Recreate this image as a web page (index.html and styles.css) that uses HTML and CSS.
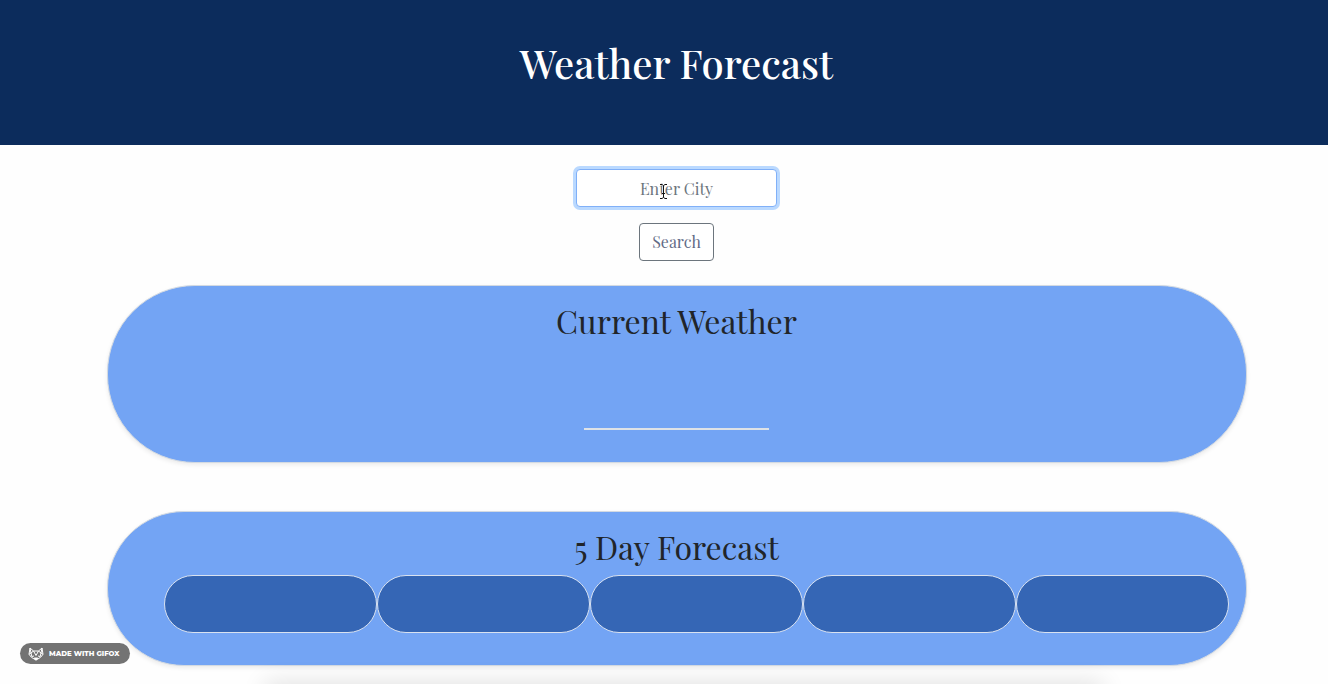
FILE: index.html
```html
<!DOCTYPE html>
<html lang="en">
<head>
<meta charset="utf-8">
<title>Weather Forecast</title>
<link rel="stylesheet" href="styles.css">
</head>
<body>
<div class="page">
  <header class="banner"><h1 class="title">Weather Forecast</h1></header>
  <main class="content">
    <form class="search">
      <div class="field">
        <input class="city" type="text" placeholder="Enter City" aria-label="Enter City">
        <svg class="cursor" viewBox="0 0 9 17" aria-hidden="true"><path class="halo" d="M1 1.500h2l1.500 1 1.500-1h2M1 15.500h2l1.500-1 1.500 1h2M4.500 2.500v12M3 10.500h3"/><path class="beam" d="M1 1.500h2l1.500 1 1.500-1h2M1 15.500h2l1.500-1 1.500 1h2M4.500 2.500v12M3 10.500h3"/></svg>
      </div>
      <button class="submit" type="button">Search</button>
    </form>
    <section class="panel current">
      <h2 class="heading heading-current">Current Weather</h2>
      <hr class="rule">
    </section>
    <section class="panel forecast">
      <h2 class="heading">5 Day Forecast</h2>
      <div class="days">
        <div class="day"></div>
        <div class="day"></div>
        <div class="day"></div>
        <div class="day"></div>
        <div class="day"></div>
      </div>
    </section>
  </main>
  <div class="dock-shadow"></div>
  <div class="badge">
    <svg class="fox" viewBox="0 0 16 14" aria-hidden="true"><path d="M2 1l3.500 3h5L14 1l1 6.300-2.300 2.900L8 13.200l-4.700-3L1 7.300zM2 1l1 5-2 1.300M14 1l-1 5 2 1.300M3 6l2.500-2L8 8.500 10.500 4 13 6M3 6l.8 3.500L6 9M13 6l-.8 3.500L10 9"/><path class="nose" d="M6.200 11h3.600L8 13z"/></svg>
    <span>MADE WITH GIFOX</span>
  </div>
</div>
</body>
</html>
```

FILE: styles.css
```css
* { box-sizing: border-box; }

body {
  margin: 0;
  background: #fefefe;
  color: #212529;
  font-family: "Playfair Display", "Liberation Serif", serif;
}

.page {
  position: relative;
  min-height: 100vh;
  overflow: hidden;
}

.banner {
  padding: 39px 0 58px 25px;
  background: #0c2c5c;
  color: #fff;
  text-align: center;
}

.title {
  margin: 0;
  font-size: 40px;
  font-weight: 500;
  line-height: 48px;
}

.content {
  display: flex;
  flex-direction: column;
  align-items: center;
  padding: 24px 0 16px 25px;
}

.search {
  display: flex;
  flex-direction: column;
  align-items: center;
  gap: 16px;
  margin-bottom: 24px;
}

.field { position: relative; }

.city,
.submit {
  display: block;
  height: 38px;
  padding: 6px 12px;
  border: 1px solid #6c757d;
  border-radius: 4px;
  background: #fff;
  color: #626b86;
  font-family: inherit;
  font-size: 16px;
  line-height: 24px;
  text-align: center;
}

.city {
  width: 201px;
  border-color: #80b0f8;
  box-shadow: 0 0 0 3px #bad9ff;
  outline: none;
}

.city::placeholder { color: #6c757d; opacity: 1; }

.cursor {
  position: absolute;
  top: 14px;
  left: 83px;
  width: 9px;
  height: 17px;
  fill: none;
}

.halo { stroke: #fff; stroke-width: 2; }
.beam { stroke: #111; stroke-width: 1; }

.panel {
  width: 100%;
  max-width: 1140px;
  border: 1px solid #d3dae2;
  border-radius: 88px;
  background: #73a4f4;
  box-shadow: 0 2px 4px rgba(0, 0, 0, 0.08);
}

.current {
  margin-bottom: 48px;
  padding: 16px 20px 32px;
}

.forecast { padding: 16px 16px 32px 56px; border-radius: 77px; }

.heading {
  margin: 0 40px 9px 0;
  font-size: 32px;
  font-weight: 400;
  line-height: 38px;
  text-align: center;
}

.heading-current { margin: 0; }

.rule {
  width: 185px;
  height: 2px;
  margin: 88px auto 0;
  border: 0;
  background: #dee2e6;
}

.days {
  display: grid;
  grid-template-columns: repeat(5, 1fr);
}

.day {
  min-height: 58px;
  border: 1px solid #d9e2f0;
  border-radius: 30px;
  background: #3566b5;
}

.dock-shadow {
  position: absolute;
  right: 225px;
  bottom: -20px;
  left: 265px;
  height: 20px;
  box-shadow: 0 0 24px rgba(0, 0, 0, 0.14);
}

.badge {
  position: absolute;
  bottom: 20px;
  left: 20px;
  display: flex;
  align-items: center;
  gap: 5px;
  height: 21px;
  padding: 0 10px 0 8px;
  border-radius: 11px;
  background: #737373;
  color: #fff;
  font: 800 7px/21px Montserrat, "DejaVu Sans", sans-serif;
  white-space: nowrap;
}

.fox {
  width: 16px;
  height: 14px;
  fill: none;
  stroke: #fff;
  stroke-width: 1;
  stroke-linejoin: round;
}

.nose { fill: #fff; }
```
